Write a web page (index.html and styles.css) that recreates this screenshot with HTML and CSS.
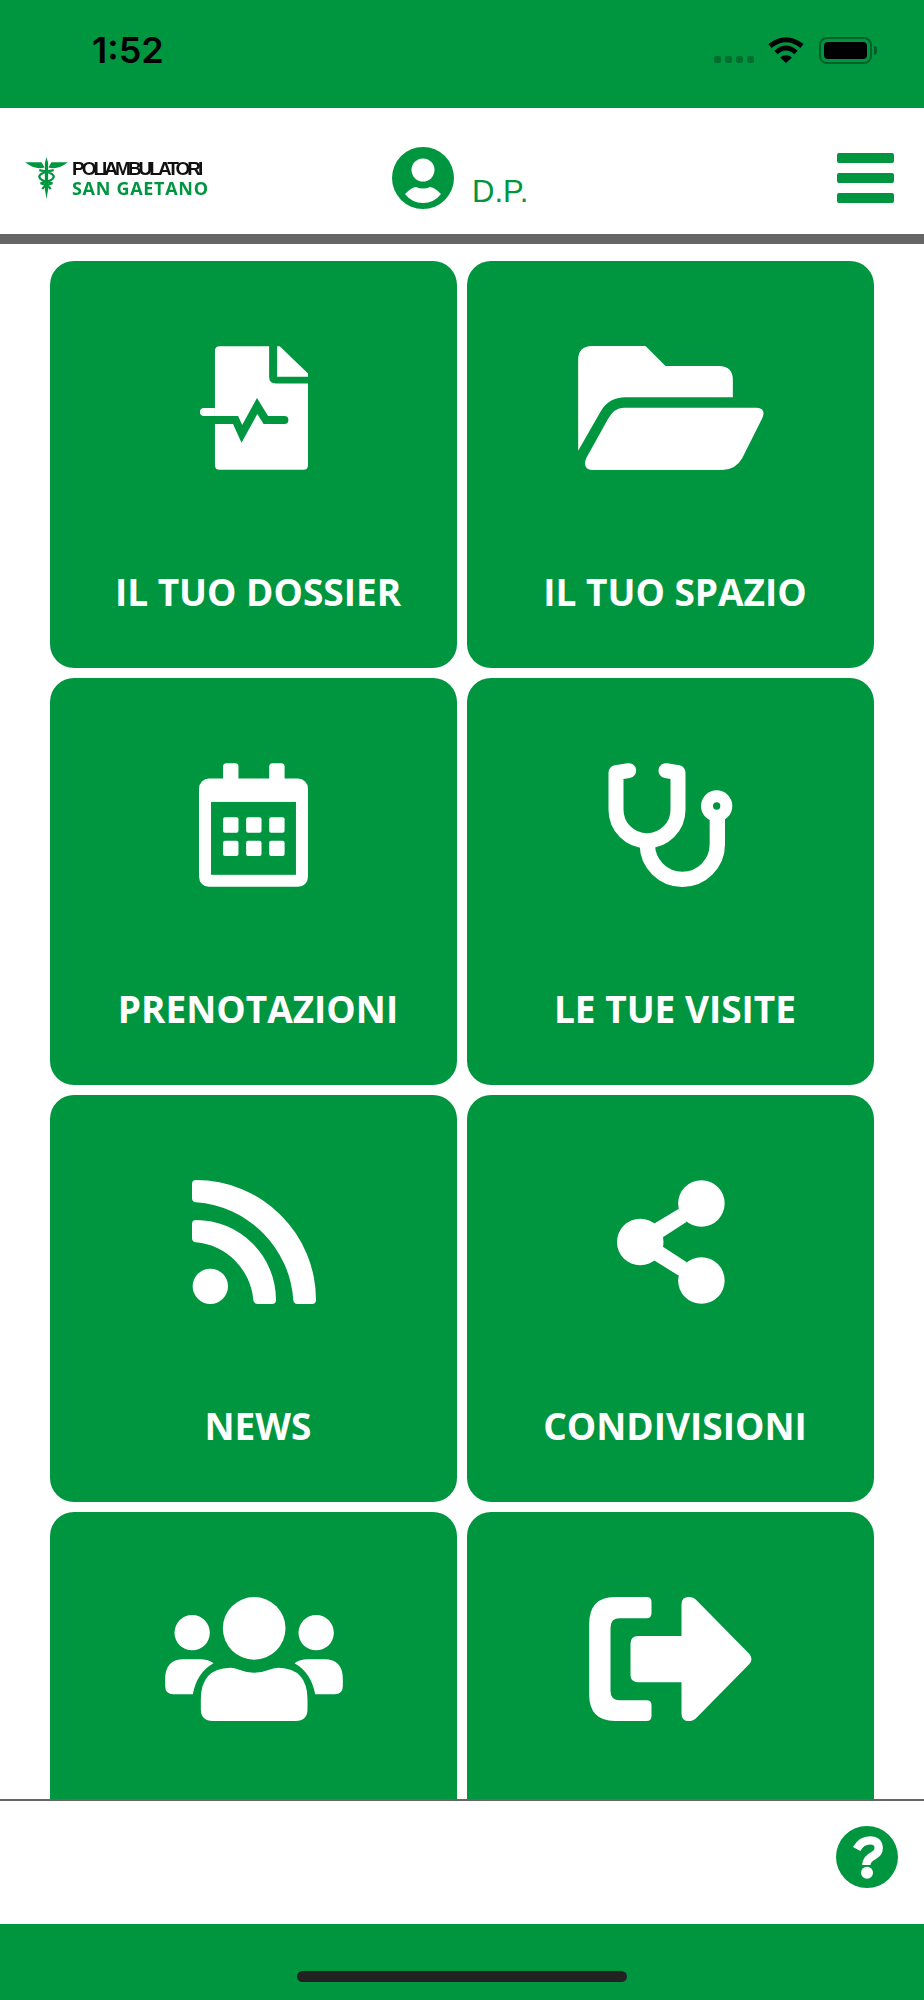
FILE: index.html
```html
<!DOCTYPE html>
<html lang="it">
<head>
  <meta charset="UTF-8" />
  <meta name="viewport" content="width=device-width, initial-scale=1.0"/>
  <title>San Gaetano</title>
  <link rel="stylesheet" href="styles.css">
</head>

<body>
  <div class="status-bar">
    <span class="status-time">1:52</span>
    <div class="signal">
      <span class="signal-dot"></span>
      <span class="signal-dot"></span>
      <span class="signal-dot"></span>
      <span class="signal-dot"></span>
    </div>
    <svg class="wifi" width="36" height="26" viewBox="0 0 36 26">
      <path d="M2 9Q18 -3.500 34 9" fill="none" stroke="#000" stroke-width="5"/>
      <path d="M8 15.500Q18 6.500 28 15.500" fill="none" stroke="#000" stroke-width="5"/>
      <path d="M18 26L12 20.500Q18 16 24 20.500Z"/>
    </svg>
    <div class="battery">
      <div class="battery-level"></div>
    </div>
    <div class="battery-tip"></div>
  </div>

  <header class="top-bar">
    <div class="logo">
      <svg class="logo-mark" width="43" height="42" viewBox="45 52 130 128">
        <path d="M45 68H95L104 84Q75 92 45 68ZM175 68H125L116 84Q145 92 175 68Z" fill="#009640"/>
        <path d="M110 52L115 70V150L110 180L105 150V70Z" fill="#009640"/>
        <path d="M88 92Q132 100 132 112Q132 124 92 132Q120 140 122 150M132 92Q88 100 88 112Q88 124 128 132Q100 140 98 150" fill="none" stroke="#009640" stroke-width="7"/>
      </svg>
      <div class="logo-text">
        <span class="logo-top">POLIAMBULATORI</span>
        <span class="logo-bottom">SAN GAETANO</span>
      </div>
    </div>

    <div class="user">
      <svg class="avatar" width="62" height="62" viewBox="0 0 62 62">
        <circle cx="31" cy="31" r="31" fill="#009640"/>
        <circle cx="31" cy="23" r="11.500" fill="#fff"/>
        <path d="M13 47Q20 40 24 40Q31 43 38 40Q42 40 49 47Q42 56 31 56Q20 56 13 47Z" fill="#fff"/>
      </svg>
      <span class="user-name">D.P.</span>
    </div>

    <div class="menu-btn">
      <span class="menu-line"></span>
      <span class="menu-line"></span>
      <span class="menu-line"></span>
    </div>
  </header>

  <main class="content">
    <div class="grid">
      <a class="card">
        <svg class="icon" width="108" height="124" viewBox="90 78 325 372">
          <path d="M135 300V92Q135 78 149 78H298V170Q298 190 318 190H415V436Q415 450 401 450H149Q135 450 135 436Z"/>
          <path d="M322 78H330L415 160V170H322Z"/>
          <path d="M135 300H197L216 342L262 258L288 300H344" fill="none" stroke="#009640" stroke-width="24" stroke-linecap="round"/>
          <path d="M135 264H102Q90 264 90 276Q90 288 102 288H135Z"/>
        </svg>
        <span class="card-label">IL TUO DOSSIER</span>
      </a>

      <a class="card">
        <svg class="icon" width="186" height="124" viewBox="83 78 557 372">
          <path d="M83 392V120Q83 78 125 78H285L345 138H505Q547 138 547 180V232H225Q175 232 150 275Z"/>
          <path d="M220 263H618Q647 265 636 293L575 415Q555 450 515 450H125Q95 448 107 415L172 298Q190 263 220 263Z"/>
        </svg>
        <span class="card-label">IL TUO SPAZIO</span>
      </a>

      <a class="card">
        <svg class="icon" width="109" height="124" viewBox="58 40 326 370">
          <rect x="130" y="40" width="46" height="70" rx="10"/>
          <rect x="268" y="40" width="46" height="70" rx="10"/>
          <rect x="58" y="86" width="326" height="324" rx="30"/>
          <rect x="94" y="156" width="254" height="218" fill="#009640"/>
          <rect x="130" y="202" width="46" height="46" rx="6"/>
          <rect x="199" y="202" width="46" height="46" rx="6"/>
          <rect x="268" y="202" width="46" height="46" rx="6"/>
          <rect x="130" y="272" width="46" height="46" rx="6"/>
          <rect x="199" y="272" width="46" height="46" rx="6"/>
          <rect x="268" y="272" width="46" height="46" rx="6"/>
        </svg>
        <span class="card-label">PRENOTAZIONI</span>
      </a>

      <a class="card">
        <svg class="icon" width="125" height="124" viewBox="55 38 373 372">
          <path d="M116 61L78 67V178A93 93 0 0 0 264 178V67L228 61" fill="none" stroke="#fff" stroke-width="45" stroke-linecap="round" stroke-linejoin="round"/>
          <path d="M172 282A105 105 0 0 0 382 282V200" fill="none" stroke="#fff" stroke-width="46"/>
          <circle cx="380" cy="167" r="29" fill="none" stroke="#fff" stroke-width="36"/>
        </svg>
        <span class="card-label">LE TUE VISITE</span>
      </a>

      <a class="card">
        <svg class="icon" width="124" height="124" viewBox="65 58 372 372">
          <circle cx="120" cy="377" r="53"/>
          <path d="M65 70Q65 58 77 58A360 360 0 0 1 437 418Q437 430 425 430H382Q370 430 369 418A315 315 0 0 0 77 125Q65 124 65 112Z"/>
          <path d="M65 190Q65 178 77 178A240 240 0 0 1 317 418Q317 430 305 430H262Q250 430 249 418A190 190 0 0 0 77 245Q65 244 65 232Z"/>
        </svg>
        <span class="card-label">NEWS</span>
      </a>

      <a class="card">
        <svg class="icon" width="108" height="124" viewBox="80 58 325 372">
          <circle cx="334" cy="128" r="70"/>
          <circle cx="150" cy="244" r="70"/>
          <circle cx="334" cy="360" r="70"/>
          <path d="M190 190L265 145L290 183L218 230V258L290 305L265 345L190 298Z"/>
        </svg>
        <span class="card-label">CONDIVISIONI</span>
      </a>

      <a class="card">
        <svg class="icon" width="178" height="124" viewBox="45 48 533 372">
          <circle cx="312" cy="142" r="94"/>
          <circle cx="126" cy="155" r="53"/>
          <circle cx="498" cy="155" r="53"/>
          <path d="M188 420Q152 420 152 385V355Q152 262 240 260Q255 260 262 265Q312 285 362 265Q372 260 385 260Q472 262 472 355V385Q472 420 436 420Z"/>
          <path d="M128 340H70Q45 340 45 315V295Q45 235 100 235H150Q175 235 190 247Q140 275 128 340Z"/>
          <path d="M495 340H553Q578 340 578 315V295Q578 235 523 235H473Q448 235 433 247Q483 275 495 340Z"/>
        </svg>
      </a>

      <a class="card">
        <svg class="icon" width="163" height="124" viewBox="58 48 488 372">
          <path d="M230 48Q245 48 245 63V97Q245 112 230 112H150Q122 112 122 140V330Q122 358 150 358H230Q245 358 245 373V405Q245 420 230 420H135Q58 420 58 340V130Q58 48 135 48Z"/>
          <path d="M335 70Q335 48 357 48Q370 48 380 58L538 218Q552 234 538 250L380 410Q370 420 357 420Q335 420 335 398V304H205Q182 304 182 282V188Q182 165 205 165H335Z"/>
        </svg>
      </a>
    </div>
  </main>

  <footer class="help-bar">
    <svg class="help" width="62" height="62" viewBox="636 165 186 186">
      <circle cx="729" cy="258" r="93" fill="#009640"/>
      <path d="M698 234Q712 208 738 208Q764 208 764 232Q764 246 748 254Q727 264 727 282" fill="none" stroke="#fff" stroke-width="25"/>
      <circle cx="729" cy="305" r="18" fill="#fff"/>
    </svg>
  </footer>

  <div class="home-bar">
    <div class="home-indicator"></div>
  </div>
</body>
</html>
```

FILE: styles.css
```css
body {
  font-family: "Open Sans", Arial, sans-serif;
  display: flex;
  flex-direction: column;
  height: 2000px;
  margin: 0;
  background-color: #fff;
  overflow: hidden;
}

/* status bar */
.status-bar {
  flex: none;
  display: flex;
  align-items: flex-start;
  height: 108px;
  padding: 37px 47px 0 92px;
  box-sizing: border-box;
  background-color: #009640;
}

.status-time {
  font-family: Inter, Arial, sans-serif;
  font-size: 36px;
  font-weight: 600;
  line-height: 26px;
  color: #000;
}

.signal {
  display: flex;
  gap: 4px;
  margin: 19px 14px 0 auto;
}

.signal-dot {
  width: 7px;
  height: 7px;
  border-radius: 2px;
  background-color: #006e2f;
}

.wifi {
  margin-right: 15px;
}

.battery {
  width: 53px;
  height: 27px;
  padding: 3px;
  box-sizing: border-box;
  border: 2px solid #00602a;
  border-radius: 8px;
}

.battery-level {
  height: 100%;
  border-radius: 4px;
  background-color: #000;
}

.battery-tip {
  width: 3px;
  height: 9px;
  margin: 9px 0 0 2px;
  border-radius: 0 4px 4px 0;
  background-color: #00602a;
}

/* top bar */
.top-bar {
  flex: none;
  display: flex;
  align-items: center;
  height: 136px;
  padding: 14px 30px 0 25px;
  box-sizing: border-box;
  border-bottom: 10px solid #666;
}

.logo {
  display: flex;
  align-items: center;
  gap: 4px;
  width: 182px;
  filter: blur(0.7px);
}

.logo-mark {
  flex: none;
}

.logo-text {
  display: flex;
  flex-direction: column;
  gap: 5px;
  white-space: nowrap;
}

.logo-top {
  font-family: "Liberation Sans", Arial, sans-serif;
  font-size: 19px;
  font-weight: 700;
  line-height: 15px;
  letter-spacing: -3px;
  color: #111;
}

.logo-bottom {
  font-size: 18px;
  font-weight: 700;
  line-height: 15px;
  letter-spacing: 0.7px;
  color: #009640;
}

.user {
  display: flex;
  align-items: flex-end;
  gap: 18px;
  margin-left: 185px;
}

.user-name {
  margin-bottom: 2px;
  font-family: "Liberation Sans", Arial, sans-serif;
  font-size: 31px;
  line-height: 30px;
  color: #009640;
}

.menu-btn {
  display: flex;
  flex-direction: column;
  gap: 10px;
  width: 57px;
  margin-left: auto;
}

.menu-line {
  height: 10px;
  border-radius: 2px;
  background-color: #009640;
}

/* tile grid, the last row runs under the footer */
.content {
  flex: 1;
  min-height: 0;
  overflow: hidden;
}

.grid {
  display: grid;
  grid-template-columns: 407px 407px;
  grid-auto-rows: 407px;
  gap: 10px;
  padding: 17px 50px;
}

.card {
  display: flex;
  flex-direction: column;
  align-items: center;
  padding-top: 85px;
  box-sizing: border-box;
  border-radius: 24px;
  background-color: #009640;
}

.icon {
  flex: none;
  fill: #fff;
}

.card-label {
  margin-top: 98px;
  padding-left: 9px;
  font-size: 37px;
  font-weight: 700;
  line-height: 48px;
  color: #fff;
  white-space: nowrap;
}

/* footer */
.help-bar {
  flex: none;
  display: flex;
  justify-content: flex-end;
  height: 125px;
  padding: 25px 26px 0 0;
  box-sizing: border-box;
  border-top: 2px solid #666;
}

.home-bar {
  flex: none;
  display: flex;
  justify-content: center;
  height: 76px;
  padding-top: 47px;
  box-sizing: border-box;
  background-color: #009640;
}

.home-indicator {
  width: 330px;
  height: 11px;
  border-radius: 6px;
  background-color: #222;
}
```
